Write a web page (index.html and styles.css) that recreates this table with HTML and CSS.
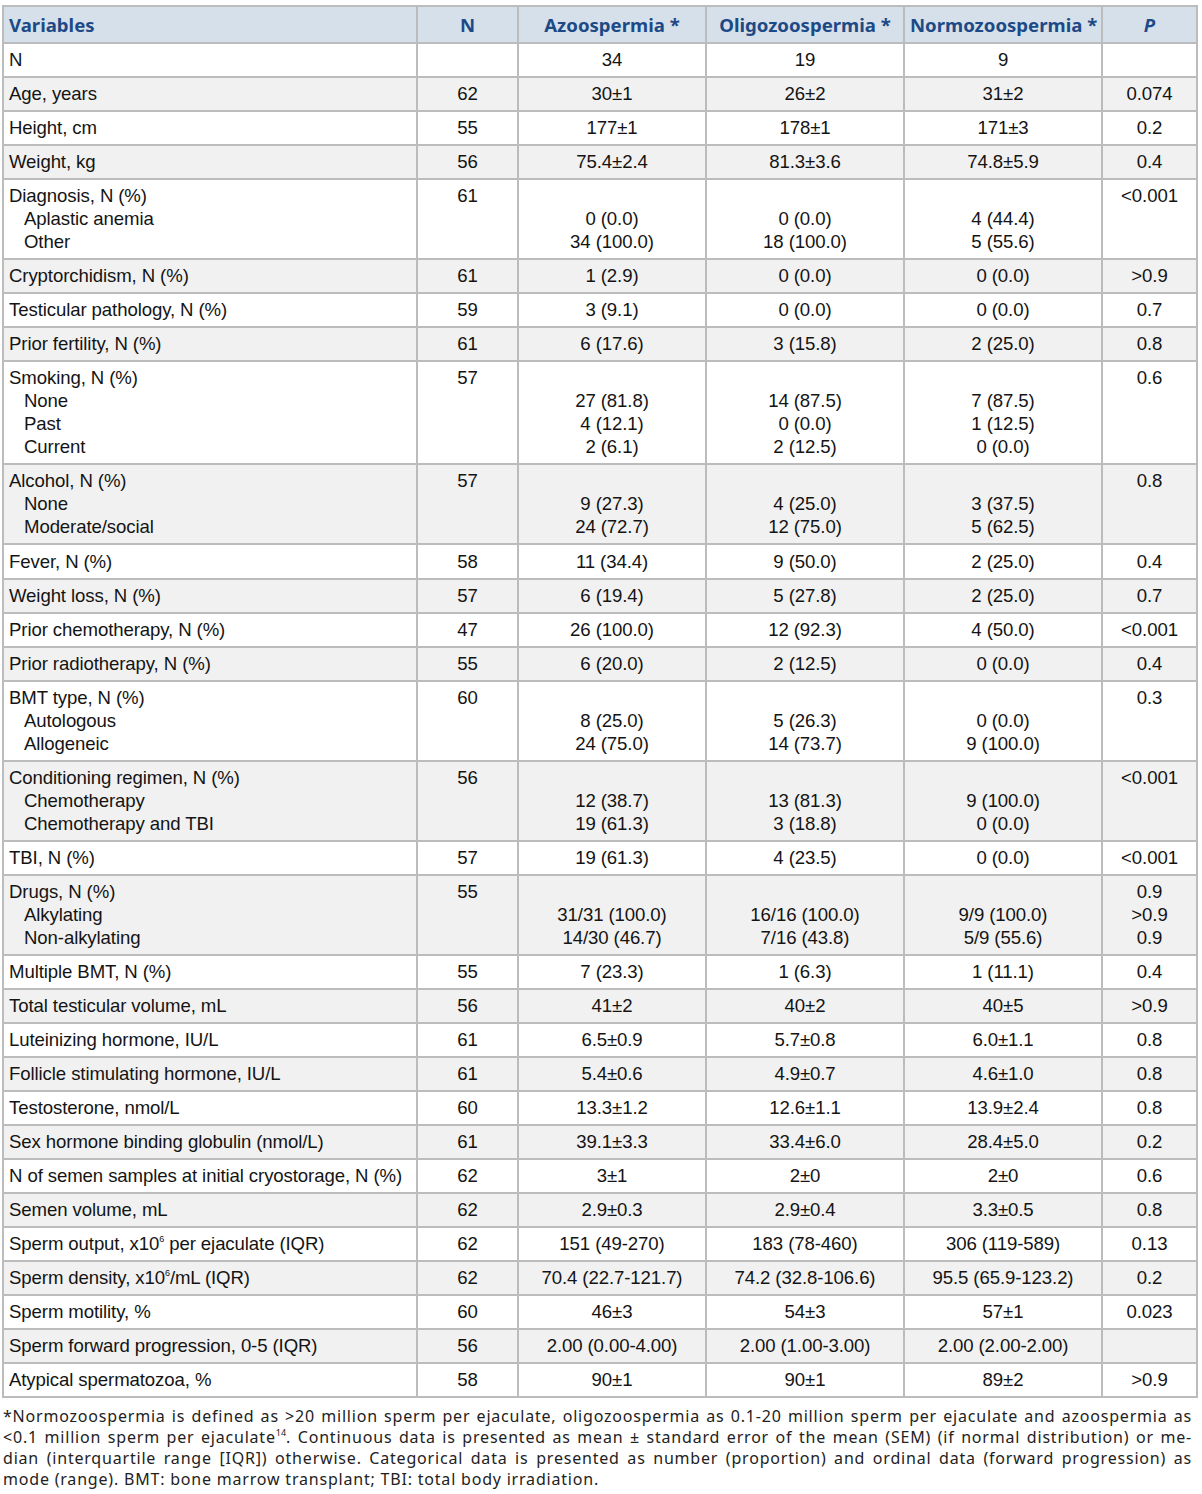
FILE: index.html
```html
<!DOCTYPE html>
<html lang="en">
<head>
<meta charset="utf-8">
<title>Table</title>
<link rel="stylesheet" href="styles.css">
</head>
<body>
<div class="page">
<table class="data">
  <colgroup>
    <col class="c-var"><col class="c-n"><col class="c-azo"><col class="c-oli"><col class="c-nor"><col class="c-p">
  </colgroup>
  <thead>
    <tr>
      <th class="left">Variables</th>
      <th>N</th>
      <th>Azoospermia *</th>
      <th>Oligozoospermia *</th>
      <th>Normozoospermia *</th>
      <th><i>P</i></th>
    </tr>
  </thead>
  <tbody>
    <tr><td class="left">N</td><td></td><td>34</td><td>19</td><td>9</td><td></td></tr>
    <tr><td class="left">Age, years</td><td>62</td><td>30±1</td><td>26±2</td><td>31±2</td><td>0.074</td></tr>
    <tr><td class="left">Height, cm</td><td>55</td><td>177±1</td><td>178±1</td><td>171±3</td><td>0.2</td></tr>
    <tr><td class="left">Weight, kg</td><td>56</td><td>75.4±2.4</td><td>81.3±3.6</td><td>74.8±5.9</td><td>0.4</td></tr>
    <tr><td class="left">Diagnosis, N (%)<span class="sub">Aplastic anemia</span><span class="sub">Other</span></td><td>61</td><td><br>0 (0.0)<br>34 (100.0)</td><td><br>0 (0.0)<br>18 (100.0)</td><td><br>4 (44.4)<br>5 (55.6)</td><td>&lt;0.001</td></tr>
    <tr><td class="left">Cryptorchidism, N (%)</td><td>61</td><td>1 (2.9)</td><td>0 (0.0)</td><td>0 (0.0)</td><td>&gt;0.9</td></tr>
    <tr><td class="left">Testicular pathology, N (%)</td><td>59</td><td>3 (9.1)</td><td>0 (0.0)</td><td>0 (0.0)</td><td>0.7</td></tr>
    <tr><td class="left">Prior fertility, N (%)</td><td>61</td><td>6 (17.6)</td><td>3 (15.8)</td><td>2 (25.0)</td><td>0.8</td></tr>
    <tr><td class="left">Smoking, N (%)<span class="sub">None</span><span class="sub">Past</span><span class="sub">Current</span></td><td>57</td><td><br>27 (81.8)<br>4 (12.1)<br>2 (6.1)</td><td><br>14 (87.5)<br>0 (0.0)<br>2 (12.5)</td><td><br>7 (87.5)<br>1 (12.5)<br>0 (0.0)</td><td>0.6</td></tr>
    <tr><td class="left">Alcohol, N (%)<span class="sub">None</span><span class="sub">Moderate/social</span></td><td>57</td><td><br>9 (27.3)<br>24 (72.7)</td><td><br>4 (25.0)<br>12 (75.0)</td><td><br>3 (37.5)<br>5 (62.5)</td><td>0.8</td></tr>
    <tr><td class="left">Fever, N (%)</td><td>58</td><td>11 (34.4)</td><td>9 (50.0)</td><td>2 (25.0)</td><td>0.4</td></tr>
    <tr><td class="left">Weight loss, N (%)</td><td>57</td><td>6 (19.4)</td><td>5 (27.8)</td><td>2 (25.0)</td><td>0.7</td></tr>
    <tr><td class="left">Prior chemotherapy, N (%)</td><td>47</td><td>26 (100.0)</td><td>12 (92.3)</td><td>4 (50.0)</td><td>&lt;0.001</td></tr>
    <tr><td class="left">Prior radiotherapy, N (%)</td><td>55</td><td>6 (20.0)</td><td>2 (12.5)</td><td>0 (0.0)</td><td>0.4</td></tr>
    <tr><td class="left">BMT type, N (%)<span class="sub">Autologous</span><span class="sub">Allogeneic</span></td><td>60</td><td><br>8 (25.0)<br>24 (75.0)</td><td><br>5 (26.3)<br>14 (73.7)</td><td><br>0 (0.0)<br>9 (100.0)</td><td>0.3</td></tr>
    <tr><td class="left">Conditioning regimen, N (%)<span class="sub">Chemotherapy</span><span class="sub">Chemotherapy and TBI</span></td><td>56</td><td><br>12 (38.7)<br>19 (61.3)</td><td><br>13 (81.3)<br>3 (18.8)</td><td><br>9 (100.0)<br>0 (0.0)</td><td>&lt;0.001</td></tr>
    <tr><td class="left">TBI, N (%)</td><td>57</td><td>19 (61.3)</td><td>4 (23.5)</td><td>0 (0.0)</td><td>&lt;0.001</td></tr>
    <tr><td class="left">Drugs, N (%)<span class="sub">Alkylating</span><span class="sub">Non-alkylating</span></td><td>55</td><td><br>31/31 (100.0)<br>14/30 (46.7)</td><td><br>16/16 (100.0)<br>7/16 (43.8)</td><td><br>9/9 (100.0)<br>5/9 (55.6)</td><td>0.9<br>&gt;0.9<br>0.9</td></tr>
    <tr><td class="left">Multiple BMT, N (%)</td><td>55</td><td>7 (23.3)</td><td>1 (6.3)</td><td>1 (11.1)</td><td>0.4</td></tr>
    <tr><td class="left">Total testicular volume, mL</td><td>56</td><td>41±2</td><td>40±2</td><td>40±5</td><td>&gt;0.9</td></tr>
    <tr><td class="left">Luteinizing hormone, IU/L</td><td>61</td><td>6.5±0.9</td><td>5.7±0.8</td><td>6.0±1.1</td><td>0.8</td></tr>
    <tr><td class="left">Follicle stimulating hormone, IU/L</td><td>61</td><td>5.4±0.6</td><td>4.9±0.7</td><td>4.6±1.0</td><td>0.8</td></tr>
    <tr><td class="left">Testosterone, nmol/L</td><td>60</td><td>13.3±1.2</td><td>12.6±1.1</td><td>13.9±2.4</td><td>0.8</td></tr>
    <tr><td class="left">Sex hormone binding globulin (nmol/L)</td><td>61</td><td>39.1±3.3</td><td>33.4±6.0</td><td>28.4±5.0</td><td>0.2</td></tr>
    <tr><td class="left">N of semen samples at initial cryostorage, N (%)</td><td>62</td><td>3±1</td><td>2±0</td><td>2±0</td><td>0.6</td></tr>
    <tr><td class="left">Semen volume, mL</td><td>62</td><td>2.9±0.3</td><td>2.9±0.4</td><td>3.3±0.5</td><td>0.8</td></tr>
    <tr><td class="left">Sperm output, x10<sup>6</sup> per ejaculate (IQR)</td><td>62</td><td>151 (49-270)</td><td>183 (78-460)</td><td>306 (119-589)</td><td>0.13</td></tr>
    <tr><td class="left">Sperm density, x10<sup>6</sup>/mL (IQR)</td><td>62</td><td>70.4 (22.7-121.7)</td><td>74.2 (32.8-106.6)</td><td>95.5 (65.9-123.2)</td><td>0.2</td></tr>
    <tr><td class="left">Sperm motility, %</td><td>60</td><td>46±3</td><td>54±3</td><td>57±1</td><td>0.023</td></tr>
    <tr><td class="left">Sperm forward progression, 0-5 (IQR)</td><td>56</td><td>2.00 (0.00-4.00)</td><td>2.00 (1.00-3.00)</td><td>2.00 (2.00-2.00)</td><td></td></tr>
    <tr><td class="left">Atypical spermatozoa, %</td><td>58</td><td>90±1</td><td>90±1</td><td>89±2</td><td>&gt;0.9</td></tr>
  </tbody>
</table>
<div class="note">
  <div class="ln">*Normozoospermia is defined as &gt;20 million sperm per ejaculate, oligozoospermia as 0.1-20 million sperm per ejaculate and azoospermia as</div>
  <div class="ln">&lt;0.1 million sperm per ejaculate<sup>14</sup>. Continuous data is presented as mean ± standard error of the mean (SEM) (if normal distribution) or me-</div>
  <div class="ln">dian (interquartile range [IQR]) otherwise. Categorical data is presented as number (proportion) and ordinal data (forward progression) as</div>
  <div class="ln last">mode (range). BMT: bone marrow transplant; TBI: total body irradiation.</div>
</div>
</div>
</body>
</html>
```

FILE: styles.css
```css
html, body {
  margin: 0;
  padding: 0;
  background: #ffffff;
}

.page {
  padding: 5px 7px 0 2px;
}

.data {
  width: 1194px;
  border-collapse: collapse;
  table-layout: fixed;
  font-family: "Liberation Sans", Arial, sans-serif;
  font-size: 18.6px;
  letter-spacing: -0.1px;
  color: #141414;
}

.c-var { width: 414px; }
.c-n { width: 101px; }
.c-azo { width: 188px; }
.c-oli { width: 198px; }
.c-nor { width: 198px; }
.c-p { width: 95px; }

.data th,
.data td {
  border: 2px solid #bcbcbc;
  text-align: center;
  vertical-align: top;
  line-height: 23px;
}

.data th {
  background: #d6e0ea;
  color: #1d4a86;
  font-family: "Noto Sans", "Open Sans", sans-serif;
  font-weight: 700;
  font-size: 18.6px;
  letter-spacing: 0;
  padding: 6px 5px 6px;
  white-space: nowrap;
}

.data td {
  padding: 4.06px 5px 5px;
}

.data th.left,
.data td.left {
  text-align: left;
  white-space: nowrap;
}

.data tbody tr:nth-child(even) td {
  background: #f1f1f1;
}

.data tbody tr:nth-child(odd) td {
  background: #ffffff;
}

.sub {
  display: block;
  padding-left: 15px;
}

.data sup {
  font-size: 9px;
  line-height: 0;
  vertical-align: 8px;
}

.note {
  margin: 8px 0 0 1px;
  width: 1189px;
  font-family: "Noto Sans", "Open Sans", sans-serif;
  font-size: 16px;
  letter-spacing: 0.8px;
  line-height: 21px;
  color: #222222;
}

.note .ln {
  text-align: justify;
  text-align-last: justify;
  white-space: nowrap;
}

.note .ln.last {
  text-align-last: left;
}

.note sup {
  font-size: 9px;
  letter-spacing: 0;
  line-height: 0;
  vertical-align: 7px;
}
```
